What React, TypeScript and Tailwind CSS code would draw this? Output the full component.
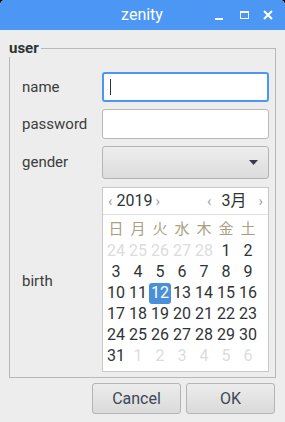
import React from "react";

const font = { fontFamily: "Roboto, 'Noto Sans', 'Noto Sans CJK JP', sans-serif" };

function Calendar() {
  const wk = ["日", "月", "火", "水", "木", "金", "土"];
  const rows: { n: number; dim?: boolean; sel?: boolean }[][] = [
    [24, 25, 26, 27, 28].map((n) => ({ n, dim: true })).concat([{ n: 1 }, { n: 2 }]),
    [3, 4, 5, 6, 7, 8, 9].map((n) => ({ n })),
    [10, 11, 12, 13, 14, 15, 16].map((n) => ({ n, sel: n === 12 })),
    [17, 18, 19, 20, 21, 22, 23].map((n) => ({ n })),
    [24, 25, 26, 27, 28, 29, 30].map((n) => ({ n })),
    [{ n: 31 }].concat([1, 2, 3, 4, 5, 6].map((n) => ({ n, dim: true }))),
  ];
  return (
    <div className="w-[167px] h-[185px] bg-white border border-[#c8c8c8] flex flex-col">
      <div className="h-[27px] flex items-center border-b border-[#e2e2e2] text-[16px] text-[#2e3436]">
        <span className="ml-[5px] text-[#a0a0a0] text-[15px]">‹</span>
        <span className="ml-[4px]">2019</span>
        <span className="ml-[3px] text-[#a0a0a0] text-[15px]">›</span>
        <span className="ml-auto text-[#a0a0a0] text-[15px]">‹</span>
        <span className="ml-[10px]">3月</span>
        <span className="ml-[12px] mr-[5px] text-[#a0a0a0] text-[15px]">›</span>
      </div>
      <div className="pl-[2px] pt-[3px]">
        <div className="grid grid-cols-[repeat(7,22px)] h-[21px] items-center text-[15px] text-[#ab9f84]">
          {wk.map((w) => (
            <div key={w} className="text-center">{w}</div>
          ))}
        </div>
        {rows.map((r, i) => (
          <div key={i} className="grid grid-cols-[repeat(7,22px)] h-[21px] items-center text-[16px]">
            {r.map((d, j) => (
              <div key={j} className="flex justify-center">
                <span
                  className={
                    d.sel
                      ? "bg-[#4a90d9] text-white rounded-[3px] w-[22px] h-[21px] flex items-center justify-center"
                      : d.dim
                      ? "text-[#dcdcdc]"
                      : "text-[#2e3436]"
                  }
                >
                  {d.n}
                </span>
              </div>
            ))}
          </div>
        ))}
      </div>
    </div>
  );
}

export default function App() {
  return (
    <div className="w-[285px] h-[422px] bg-black overflow-hidden" style={font}>
      <div className="w-full h-full rounded-t-[5px] overflow-hidden bg-[#ededed] flex flex-col">
        <div className="h-[30px] bg-[#4d97f4] flex items-center relative shrink-0">
          <div className="absolute inset-0 flex items-center justify-center text-white text-[16px] pr-[1px]">zenity</div>
          <div className="ml-auto flex items-center mr-[12px] relative">
            <div className="w-[8px] h-[2px] bg-white mt-[8px]" />
            <div className="w-[9px] h-[8px] border border-white border-t-2 ml-[17px]" />
            <svg width="10" height="10" viewBox="0 0 10 10" className="ml-[14px]">
              <path d="M1 1 L9 9 M9 1 L1 9" stroke="white" strokeWidth="2" />
            </svg>
          </div>
        </div>
        <div className="flex-1 px-[9px] pt-[11px] flex flex-col">
          <div className="relative border border-[#b8b8b8] mt-[7px] h-[330px] flex flex-col pl-[12px] pt-[23px]">
            <div className="absolute left-[-1px] top-[-10px] bg-[#ededed] pr-[2px] text-[15px] font-bold text-[#2e3436] leading-[18px]">
              user
            </div>
            <div className="flex items-center h-[30px]">
              <div className="w-[80px] text-[15px] text-[#3c3c3c]">name</div>
              <div className="w-[167px] h-[30px] bg-white border-2 border-[#4d97f4] rounded-[3px] flex items-center pl-[6px]">
                <div className="w-[1px] h-[16px] bg-[#2e3436]" />
              </div>
            </div>
            <div className="flex items-center h-[30px] mt-[7px]">
              <div className="w-[80px] text-[15px] text-[#3c3c3c]">password</div>
              <div className="w-[167px] h-[30px] bg-white border border-[#b8b8b8] rounded-[3px]" />
            </div>
            <div className="flex items-center h-[33px] mt-[7px]">
              <div className="w-[80px] text-[15px] text-[#3c3c3c]">gender</div>
              <div className="w-[167px] h-[33px] border border-[#b4b4b4] rounded-[3px] bg-gradient-to-b from-[#eeeeee] to-[#dcdcdc] flex items-center justify-end pr-[10px]">
                <svg width="9" height="5" viewBox="0 0 9 5">
                  <path d="M0 0 L9 0 L4.5 5 Z" fill="#3a3a4a" />
                </svg>
              </div>
            </div>
            <div className="flex items-center mt-[8px]">
              <div className="w-[80px] text-[15px] text-[#3c3c3c] pt-[4px]">birth</div>
              <Calendar />
            </div>
          </div>
          <div className="flex justify-end gap-[5px] mt-[5px] mr-[1px]">
            <button className="w-[89px] h-[31px] rounded-[3px] border border-[#b4b4b4] bg-gradient-to-b from-[#ececec] to-[#dadada] text-[16px] text-[#3c4656]">
              Cancel
            </button>
            <button className="w-[89px] h-[31px] rounded-[3px] border border-[#b4b4b4] bg-gradient-to-b from-[#ececec] to-[#dadada] text-[16px] text-[#3c4656]">
              OK
            </button>
          </div>
        </div>
      </div>
    </div>
  );
}
